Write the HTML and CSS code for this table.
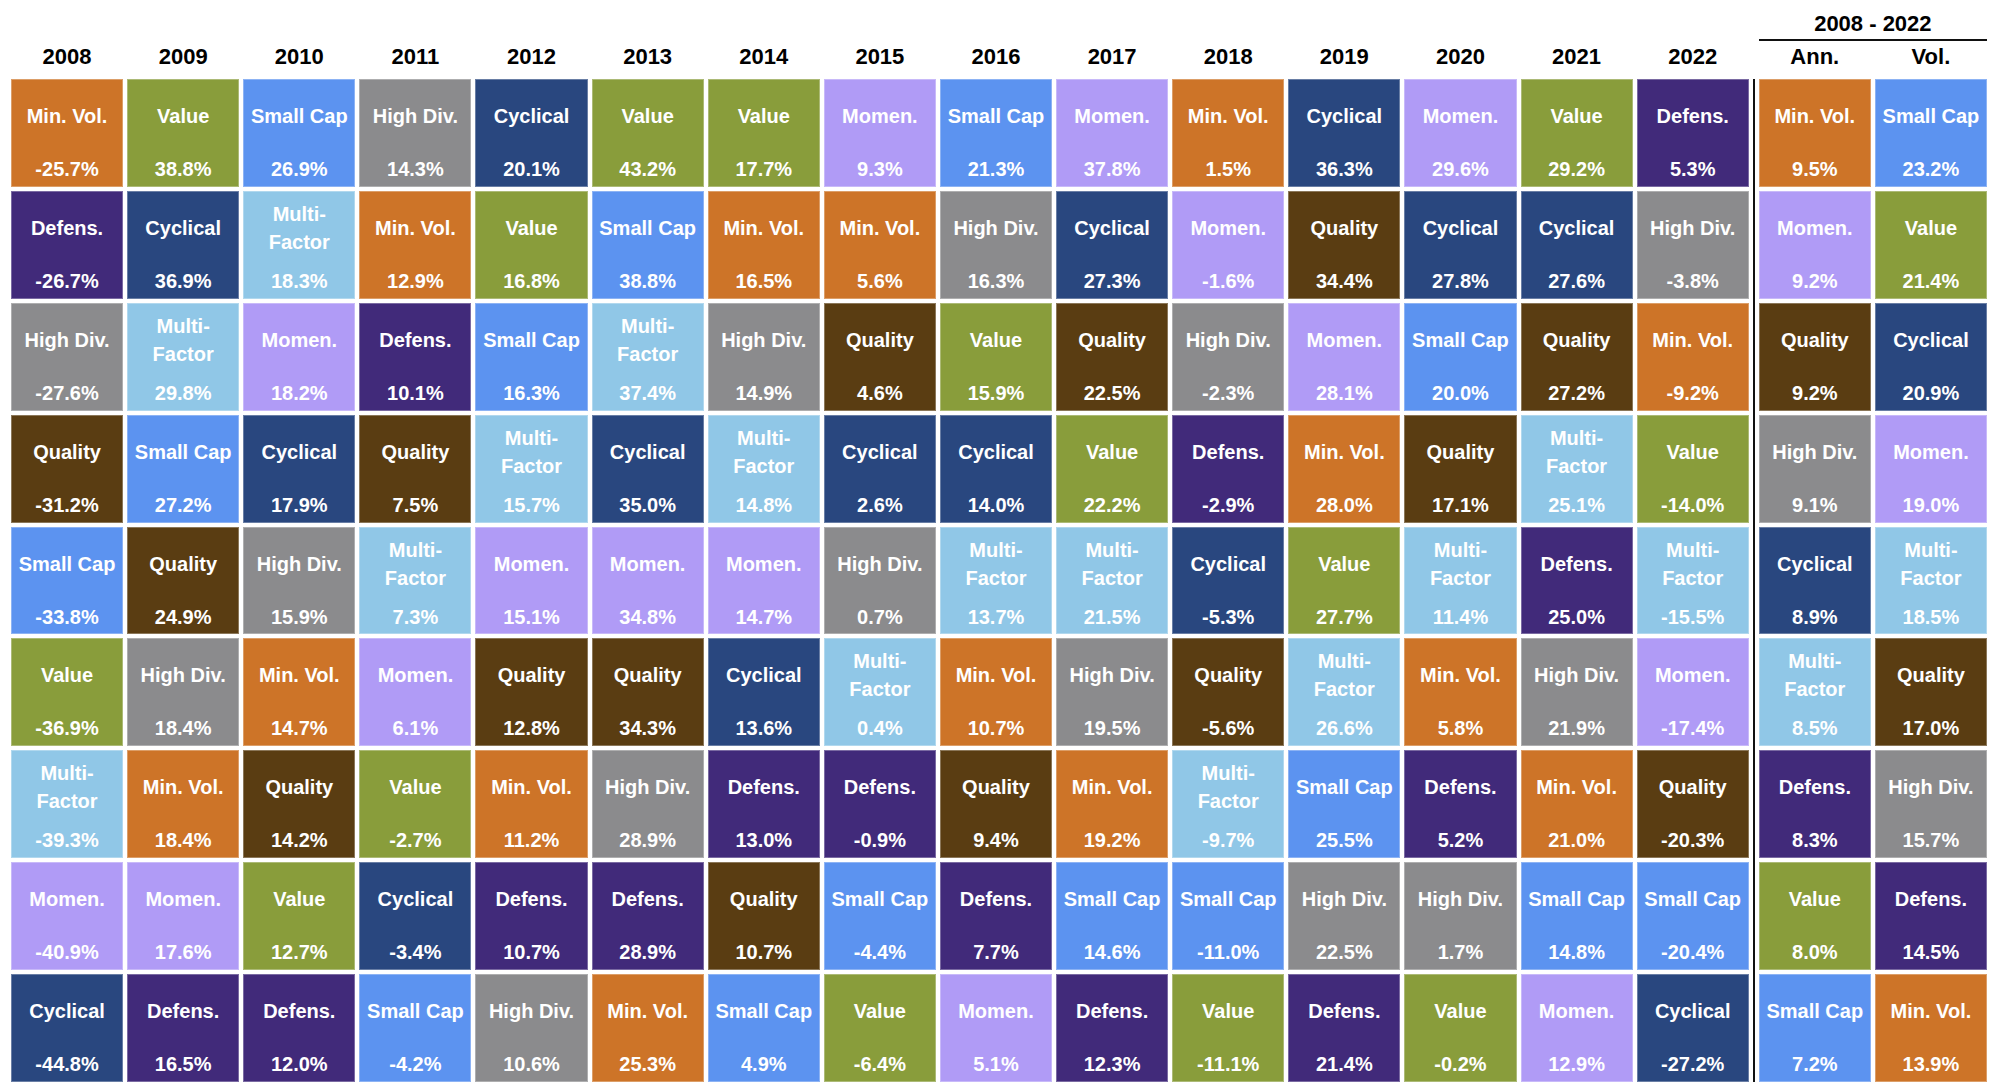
FILE: index.html
```html
<!DOCTYPE html>
<html lang="en">
<head>
<meta charset="utf-8">
<title>Factor Returns 2008 - 2022</title>
<link rel="stylesheet" href="styles.css">
</head>
<body>
<div class="chart">
  <div class="year">2008</div><div class="year">2009</div><div class="year">2010</div><div class="year">2011</div><div class="year">2012</div><div class="year">2013</div><div class="year">2014</div><div class="year">2015</div><div class="year">2016</div><div class="year">2017</div><div class="year">2018</div><div class="year">2019</div><div class="year">2020</div><div class="year">2021</div><div class="year">2022</div>
  <div class="divider"></div>
  <div class="sumhead">
    <div class="range">2008 - 2022</div>
    <div class="subhead"><div class="sublbl">Ann.</div><div class="sublbl">Vol.</div></div>
  </div>

  <!-- row 1 -->
  <div class="cell mv"><span class="lbl">Min. Vol.</span><span class="pct">-25.7%</span></div>
  <div class="cell va"><span class="lbl">Value</span><span class="pct">38.8%</span></div>
  <div class="cell sc"><span class="lbl">Small Cap</span><span class="pct">26.9%</span></div>
  <div class="cell hd"><span class="lbl">High Div.</span><span class="pct">14.3%</span></div>
  <div class="cell cy"><span class="lbl">Cyclical</span><span class="pct">20.1%</span></div>
  <div class="cell va"><span class="lbl">Value</span><span class="pct">43.2%</span></div>
  <div class="cell va"><span class="lbl">Value</span><span class="pct">17.7%</span></div>
  <div class="cell mo"><span class="lbl">Momen.</span><span class="pct">9.3%</span></div>
  <div class="cell sc"><span class="lbl">Small Cap</span><span class="pct">21.3%</span></div>
  <div class="cell mo"><span class="lbl">Momen.</span><span class="pct">37.8%</span></div>
  <div class="cell mv"><span class="lbl">Min. Vol.</span><span class="pct">1.5%</span></div>
  <div class="cell cy"><span class="lbl">Cyclical</span><span class="pct">36.3%</span></div>
  <div class="cell mo"><span class="lbl">Momen.</span><span class="pct">29.6%</span></div>
  <div class="cell va"><span class="lbl">Value</span><span class="pct">29.2%</span></div>
  <div class="cell de"><span class="lbl">Defens.</span><span class="pct">5.3%</span></div>
  <div class="cell mv"><span class="lbl">Min. Vol.</span><span class="pct">9.5%</span></div>
  <div class="cell sc"><span class="lbl">Small Cap</span><span class="pct">23.2%</span></div>

  <!-- row 2 -->
  <div class="cell de"><span class="lbl">Defens.</span><span class="pct">-26.7%</span></div>
  <div class="cell cy"><span class="lbl">Cyclical</span><span class="pct">36.9%</span></div>
  <div class="cell mf"><span class="lbl">Multi-<br>Factor</span><span class="pct">18.3%</span></div>
  <div class="cell mv"><span class="lbl">Min. Vol.</span><span class="pct">12.9%</span></div>
  <div class="cell va"><span class="lbl">Value</span><span class="pct">16.8%</span></div>
  <div class="cell sc"><span class="lbl">Small Cap</span><span class="pct">38.8%</span></div>
  <div class="cell mv"><span class="lbl">Min. Vol.</span><span class="pct">16.5%</span></div>
  <div class="cell mv"><span class="lbl">Min. Vol.</span><span class="pct">5.6%</span></div>
  <div class="cell hd"><span class="lbl">High Div.</span><span class="pct">16.3%</span></div>
  <div class="cell cy"><span class="lbl">Cyclical</span><span class="pct">27.3%</span></div>
  <div class="cell mo"><span class="lbl">Momen.</span><span class="pct">-1.6%</span></div>
  <div class="cell qu"><span class="lbl">Quality</span><span class="pct">34.4%</span></div>
  <div class="cell cy"><span class="lbl">Cyclical</span><span class="pct">27.8%</span></div>
  <div class="cell cy"><span class="lbl">Cyclical</span><span class="pct">27.6%</span></div>
  <div class="cell hd"><span class="lbl">High Div.</span><span class="pct">-3.8%</span></div>
  <div class="cell mo"><span class="lbl">Momen.</span><span class="pct">9.2%</span></div>
  <div class="cell va"><span class="lbl">Value</span><span class="pct">21.4%</span></div>

  <!-- row 3 -->
  <div class="cell hd"><span class="lbl">High Div.</span><span class="pct">-27.6%</span></div>
  <div class="cell mf"><span class="lbl">Multi-<br>Factor</span><span class="pct">29.8%</span></div>
  <div class="cell mo"><span class="lbl">Momen.</span><span class="pct">18.2%</span></div>
  <div class="cell de"><span class="lbl">Defens.</span><span class="pct">10.1%</span></div>
  <div class="cell sc"><span class="lbl">Small Cap</span><span class="pct">16.3%</span></div>
  <div class="cell mf"><span class="lbl">Multi-<br>Factor</span><span class="pct">37.4%</span></div>
  <div class="cell hd"><span class="lbl">High Div.</span><span class="pct">14.9%</span></div>
  <div class="cell qu"><span class="lbl">Quality</span><span class="pct">4.6%</span></div>
  <div class="cell va"><span class="lbl">Value</span><span class="pct">15.9%</span></div>
  <div class="cell qu"><span class="lbl">Quality</span><span class="pct">22.5%</span></div>
  <div class="cell hd"><span class="lbl">High Div.</span><span class="pct">-2.3%</span></div>
  <div class="cell mo"><span class="lbl">Momen.</span><span class="pct">28.1%</span></div>
  <div class="cell sc"><span class="lbl">Small Cap</span><span class="pct">20.0%</span></div>
  <div class="cell qu"><span class="lbl">Quality</span><span class="pct">27.2%</span></div>
  <div class="cell mv"><span class="lbl">Min. Vol.</span><span class="pct">-9.2%</span></div>
  <div class="cell qu"><span class="lbl">Quality</span><span class="pct">9.2%</span></div>
  <div class="cell cy"><span class="lbl">Cyclical</span><span class="pct">20.9%</span></div>

  <!-- row 4 -->
  <div class="cell qu"><span class="lbl">Quality</span><span class="pct">-31.2%</span></div>
  <div class="cell sc"><span class="lbl">Small Cap</span><span class="pct">27.2%</span></div>
  <div class="cell cy"><span class="lbl">Cyclical</span><span class="pct">17.9%</span></div>
  <div class="cell qu"><span class="lbl">Quality</span><span class="pct">7.5%</span></div>
  <div class="cell mf"><span class="lbl">Multi-<br>Factor</span><span class="pct">15.7%</span></div>
  <div class="cell cy"><span class="lbl">Cyclical</span><span class="pct">35.0%</span></div>
  <div class="cell mf"><span class="lbl">Multi-<br>Factor</span><span class="pct">14.8%</span></div>
  <div class="cell cy"><span class="lbl">Cyclical</span><span class="pct">2.6%</span></div>
  <div class="cell cy"><span class="lbl">Cyclical</span><span class="pct">14.0%</span></div>
  <div class="cell va"><span class="lbl">Value</span><span class="pct">22.2%</span></div>
  <div class="cell de"><span class="lbl">Defens.</span><span class="pct">-2.9%</span></div>
  <div class="cell mv"><span class="lbl">Min. Vol.</span><span class="pct">28.0%</span></div>
  <div class="cell qu"><span class="lbl">Quality</span><span class="pct">17.1%</span></div>
  <div class="cell mf"><span class="lbl">Multi-<br>Factor</span><span class="pct">25.1%</span></div>
  <div class="cell va"><span class="lbl">Value</span><span class="pct">-14.0%</span></div>
  <div class="cell hd"><span class="lbl">High Div.</span><span class="pct">9.1%</span></div>
  <div class="cell mo"><span class="lbl">Momen.</span><span class="pct">19.0%</span></div>

  <!-- row 5 -->
  <div class="cell sc"><span class="lbl">Small Cap</span><span class="pct">-33.8%</span></div>
  <div class="cell qu"><span class="lbl">Quality</span><span class="pct">24.9%</span></div>
  <div class="cell hd"><span class="lbl">High Div.</span><span class="pct">15.9%</span></div>
  <div class="cell mf"><span class="lbl">Multi-<br>Factor</span><span class="pct">7.3%</span></div>
  <div class="cell mo"><span class="lbl">Momen.</span><span class="pct">15.1%</span></div>
  <div class="cell mo"><span class="lbl">Momen.</span><span class="pct">34.8%</span></div>
  <div class="cell mo"><span class="lbl">Momen.</span><span class="pct">14.7%</span></div>
  <div class="cell hd"><span class="lbl">High Div.</span><span class="pct">0.7%</span></div>
  <div class="cell mf"><span class="lbl">Multi-<br>Factor</span><span class="pct">13.7%</span></div>
  <div class="cell mf"><span class="lbl">Multi-<br>Factor</span><span class="pct">21.5%</span></div>
  <div class="cell cy"><span class="lbl">Cyclical</span><span class="pct">-5.3%</span></div>
  <div class="cell va"><span class="lbl">Value</span><span class="pct">27.7%</span></div>
  <div class="cell mf"><span class="lbl">Multi-<br>Factor</span><span class="pct">11.4%</span></div>
  <div class="cell de"><span class="lbl">Defens.</span><span class="pct">25.0%</span></div>
  <div class="cell mf"><span class="lbl">Multi-<br>Factor</span><span class="pct">-15.5%</span></div>
  <div class="cell cy"><span class="lbl">Cyclical</span><span class="pct">8.9%</span></div>
  <div class="cell mf"><span class="lbl">Multi-<br>Factor</span><span class="pct">18.5%</span></div>

  <!-- row 6 -->
  <div class="cell va"><span class="lbl">Value</span><span class="pct">-36.9%</span></div>
  <div class="cell hd"><span class="lbl">High Div.</span><span class="pct">18.4%</span></div>
  <div class="cell mv"><span class="lbl">Min. Vol.</span><span class="pct">14.7%</span></div>
  <div class="cell mo"><span class="lbl">Momen.</span><span class="pct">6.1%</span></div>
  <div class="cell qu"><span class="lbl">Quality</span><span class="pct">12.8%</span></div>
  <div class="cell qu"><span class="lbl">Quality</span><span class="pct">34.3%</span></div>
  <div class="cell cy"><span class="lbl">Cyclical</span><span class="pct">13.6%</span></div>
  <div class="cell mf"><span class="lbl">Multi-<br>Factor</span><span class="pct">0.4%</span></div>
  <div class="cell mv"><span class="lbl">Min. Vol.</span><span class="pct">10.7%</span></div>
  <div class="cell hd"><span class="lbl">High Div.</span><span class="pct">19.5%</span></div>
  <div class="cell qu"><span class="lbl">Quality</span><span class="pct">-5.6%</span></div>
  <div class="cell mf"><span class="lbl">Multi-<br>Factor</span><span class="pct">26.6%</span></div>
  <div class="cell mv"><span class="lbl">Min. Vol.</span><span class="pct">5.8%</span></div>
  <div class="cell hd"><span class="lbl">High Div.</span><span class="pct">21.9%</span></div>
  <div class="cell mo"><span class="lbl">Momen.</span><span class="pct">-17.4%</span></div>
  <div class="cell mf"><span class="lbl">Multi-<br>Factor</span><span class="pct">8.5%</span></div>
  <div class="cell qu"><span class="lbl">Quality</span><span class="pct">17.0%</span></div>

  <!-- row 7 -->
  <div class="cell mf"><span class="lbl">Multi-<br>Factor</span><span class="pct">-39.3%</span></div>
  <div class="cell mv"><span class="lbl">Min. Vol.</span><span class="pct">18.4%</span></div>
  <div class="cell qu"><span class="lbl">Quality</span><span class="pct">14.2%</span></div>
  <div class="cell va"><span class="lbl">Value</span><span class="pct">-2.7%</span></div>
  <div class="cell mv"><span class="lbl">Min. Vol.</span><span class="pct">11.2%</span></div>
  <div class="cell hd"><span class="lbl">High Div.</span><span class="pct">28.9%</span></div>
  <div class="cell de"><span class="lbl">Defens.</span><span class="pct">13.0%</span></div>
  <div class="cell de"><span class="lbl">Defens.</span><span class="pct">-0.9%</span></div>
  <div class="cell qu"><span class="lbl">Quality</span><span class="pct">9.4%</span></div>
  <div class="cell mv"><span class="lbl">Min. Vol.</span><span class="pct">19.2%</span></div>
  <div class="cell mf"><span class="lbl">Multi-<br>Factor</span><span class="pct">-9.7%</span></div>
  <div class="cell sc"><span class="lbl">Small Cap</span><span class="pct">25.5%</span></div>
  <div class="cell de"><span class="lbl">Defens.</span><span class="pct">5.2%</span></div>
  <div class="cell mv"><span class="lbl">Min. Vol.</span><span class="pct">21.0%</span></div>
  <div class="cell qu"><span class="lbl">Quality</span><span class="pct">-20.3%</span></div>
  <div class="cell de"><span class="lbl">Defens.</span><span class="pct">8.3%</span></div>
  <div class="cell hd"><span class="lbl">High Div.</span><span class="pct">15.7%</span></div>

  <!-- row 8 -->
  <div class="cell mo"><span class="lbl">Momen.</span><span class="pct">-40.9%</span></div>
  <div class="cell mo"><span class="lbl">Momen.</span><span class="pct">17.6%</span></div>
  <div class="cell va"><span class="lbl">Value</span><span class="pct">12.7%</span></div>
  <div class="cell cy"><span class="lbl">Cyclical</span><span class="pct">-3.4%</span></div>
  <div class="cell de"><span class="lbl">Defens.</span><span class="pct">10.7%</span></div>
  <div class="cell de"><span class="lbl">Defens.</span><span class="pct">28.9%</span></div>
  <div class="cell qu"><span class="lbl">Quality</span><span class="pct">10.7%</span></div>
  <div class="cell sc"><span class="lbl">Small Cap</span><span class="pct">-4.4%</span></div>
  <div class="cell de"><span class="lbl">Defens.</span><span class="pct">7.7%</span></div>
  <div class="cell sc"><span class="lbl">Small Cap</span><span class="pct">14.6%</span></div>
  <div class="cell sc"><span class="lbl">Small Cap</span><span class="pct">-11.0%</span></div>
  <div class="cell hd"><span class="lbl">High Div.</span><span class="pct">22.5%</span></div>
  <div class="cell hd"><span class="lbl">High Div.</span><span class="pct">1.7%</span></div>
  <div class="cell sc"><span class="lbl">Small Cap</span><span class="pct">14.8%</span></div>
  <div class="cell sc"><span class="lbl">Small Cap</span><span class="pct">-20.4%</span></div>
  <div class="cell va"><span class="lbl">Value</span><span class="pct">8.0%</span></div>
  <div class="cell de"><span class="lbl">Defens.</span><span class="pct">14.5%</span></div>

  <!-- row 9 -->
  <div class="cell cy"><span class="lbl">Cyclical</span><span class="pct">-44.8%</span></div>
  <div class="cell de"><span class="lbl">Defens.</span><span class="pct">16.5%</span></div>
  <div class="cell de"><span class="lbl">Defens.</span><span class="pct">12.0%</span></div>
  <div class="cell sc"><span class="lbl">Small Cap</span><span class="pct">-4.2%</span></div>
  <div class="cell hd"><span class="lbl">High Div.</span><span class="pct">10.6%</span></div>
  <div class="cell mv"><span class="lbl">Min. Vol.</span><span class="pct">25.3%</span></div>
  <div class="cell sc"><span class="lbl">Small Cap</span><span class="pct">4.9%</span></div>
  <div class="cell va"><span class="lbl">Value</span><span class="pct">-6.4%</span></div>
  <div class="cell mo"><span class="lbl">Momen.</span><span class="pct">5.1%</span></div>
  <div class="cell de"><span class="lbl">Defens.</span><span class="pct">12.3%</span></div>
  <div class="cell va"><span class="lbl">Value</span><span class="pct">-11.1%</span></div>
  <div class="cell de"><span class="lbl">Defens.</span><span class="pct">21.4%</span></div>
  <div class="cell va"><span class="lbl">Value</span><span class="pct">-0.2%</span></div>
  <div class="cell mo"><span class="lbl">Momen.</span><span class="pct">12.9%</span></div>
  <div class="cell cy"><span class="lbl">Cyclical</span><span class="pct">-27.2%</span></div>
  <div class="cell sc"><span class="lbl">Small Cap</span><span class="pct">7.2%</span></div>
  <div class="cell mv"><span class="lbl">Min. Vol.</span><span class="pct">13.9%</span></div>
</div>
</body>
</html>
```

FILE: styles.css
```css
html, body {
  margin: 0;
  padding: 0;
  background: #ffffff;
}

body {
  padding-left: 11px;
  font-family: "Liberation Sans", Arial, sans-serif;
  font-weight: bold;
}

.chart {
  width: 1976px;
  display: grid;
  grid-template-columns: repeat(15, 1fr) 2px repeat(2, 1fr);
  grid-template-rows: 75px repeat(9, 107.9px);
  column-gap: 4px;
  row-gap: 4px;
}

.year {
  display: flex;
  align-items: flex-end;
  justify-content: center;
  padding-bottom: 7px;
  font-size: 22px;
  line-height: 22px;
  color: #000;
}

.divider {
  grid-column: 16;
  grid-row: 1 / 11;
  margin-top: 79px;
  background: #111;
}

.sumhead {
  grid-column: 17 / 19;
  grid-row: 1;
  display: flex;
  flex-direction: column;
}

.range {
  padding-top: 13px;
  padding-bottom: 4px;
  font-size: 22px;
  line-height: 22px;
  text-align: center;
  color: #000;
  border-bottom: 2px solid #111;
}

.subhead {
  margin-top: 5px;
  display: grid;
  grid-template-columns: 1fr 1fr;
  column-gap: 4px;
}

.sublbl {
  font-size: 22px;
  line-height: 22px;
  text-align: center;
  color: #000;
}

.cell {
  display: grid;
  grid-template-rows: 74px 1fr;
  align-items: center;
  text-align: center;
  color: #ffffff;
  font-size: 20px;
  box-shadow: inset 0 0 0 1px rgba(255, 255, 255, 0.3);
}

.lbl {
  line-height: 28px;
}

.pct {
  line-height: 24px;
  padding-bottom: 2px;
}

.mv { background: #cd7428; }
.va { background: #899d3b; }
.sc { background: #5c93f0; }
.hd { background: #8b8b8d; }
.cy { background: #29477f; }
.de { background: #412a7a; }
.mf { background: #90c7e7; }
.mo { background: #b09bf6; }
.qu { background: #5a3d12; }
```
